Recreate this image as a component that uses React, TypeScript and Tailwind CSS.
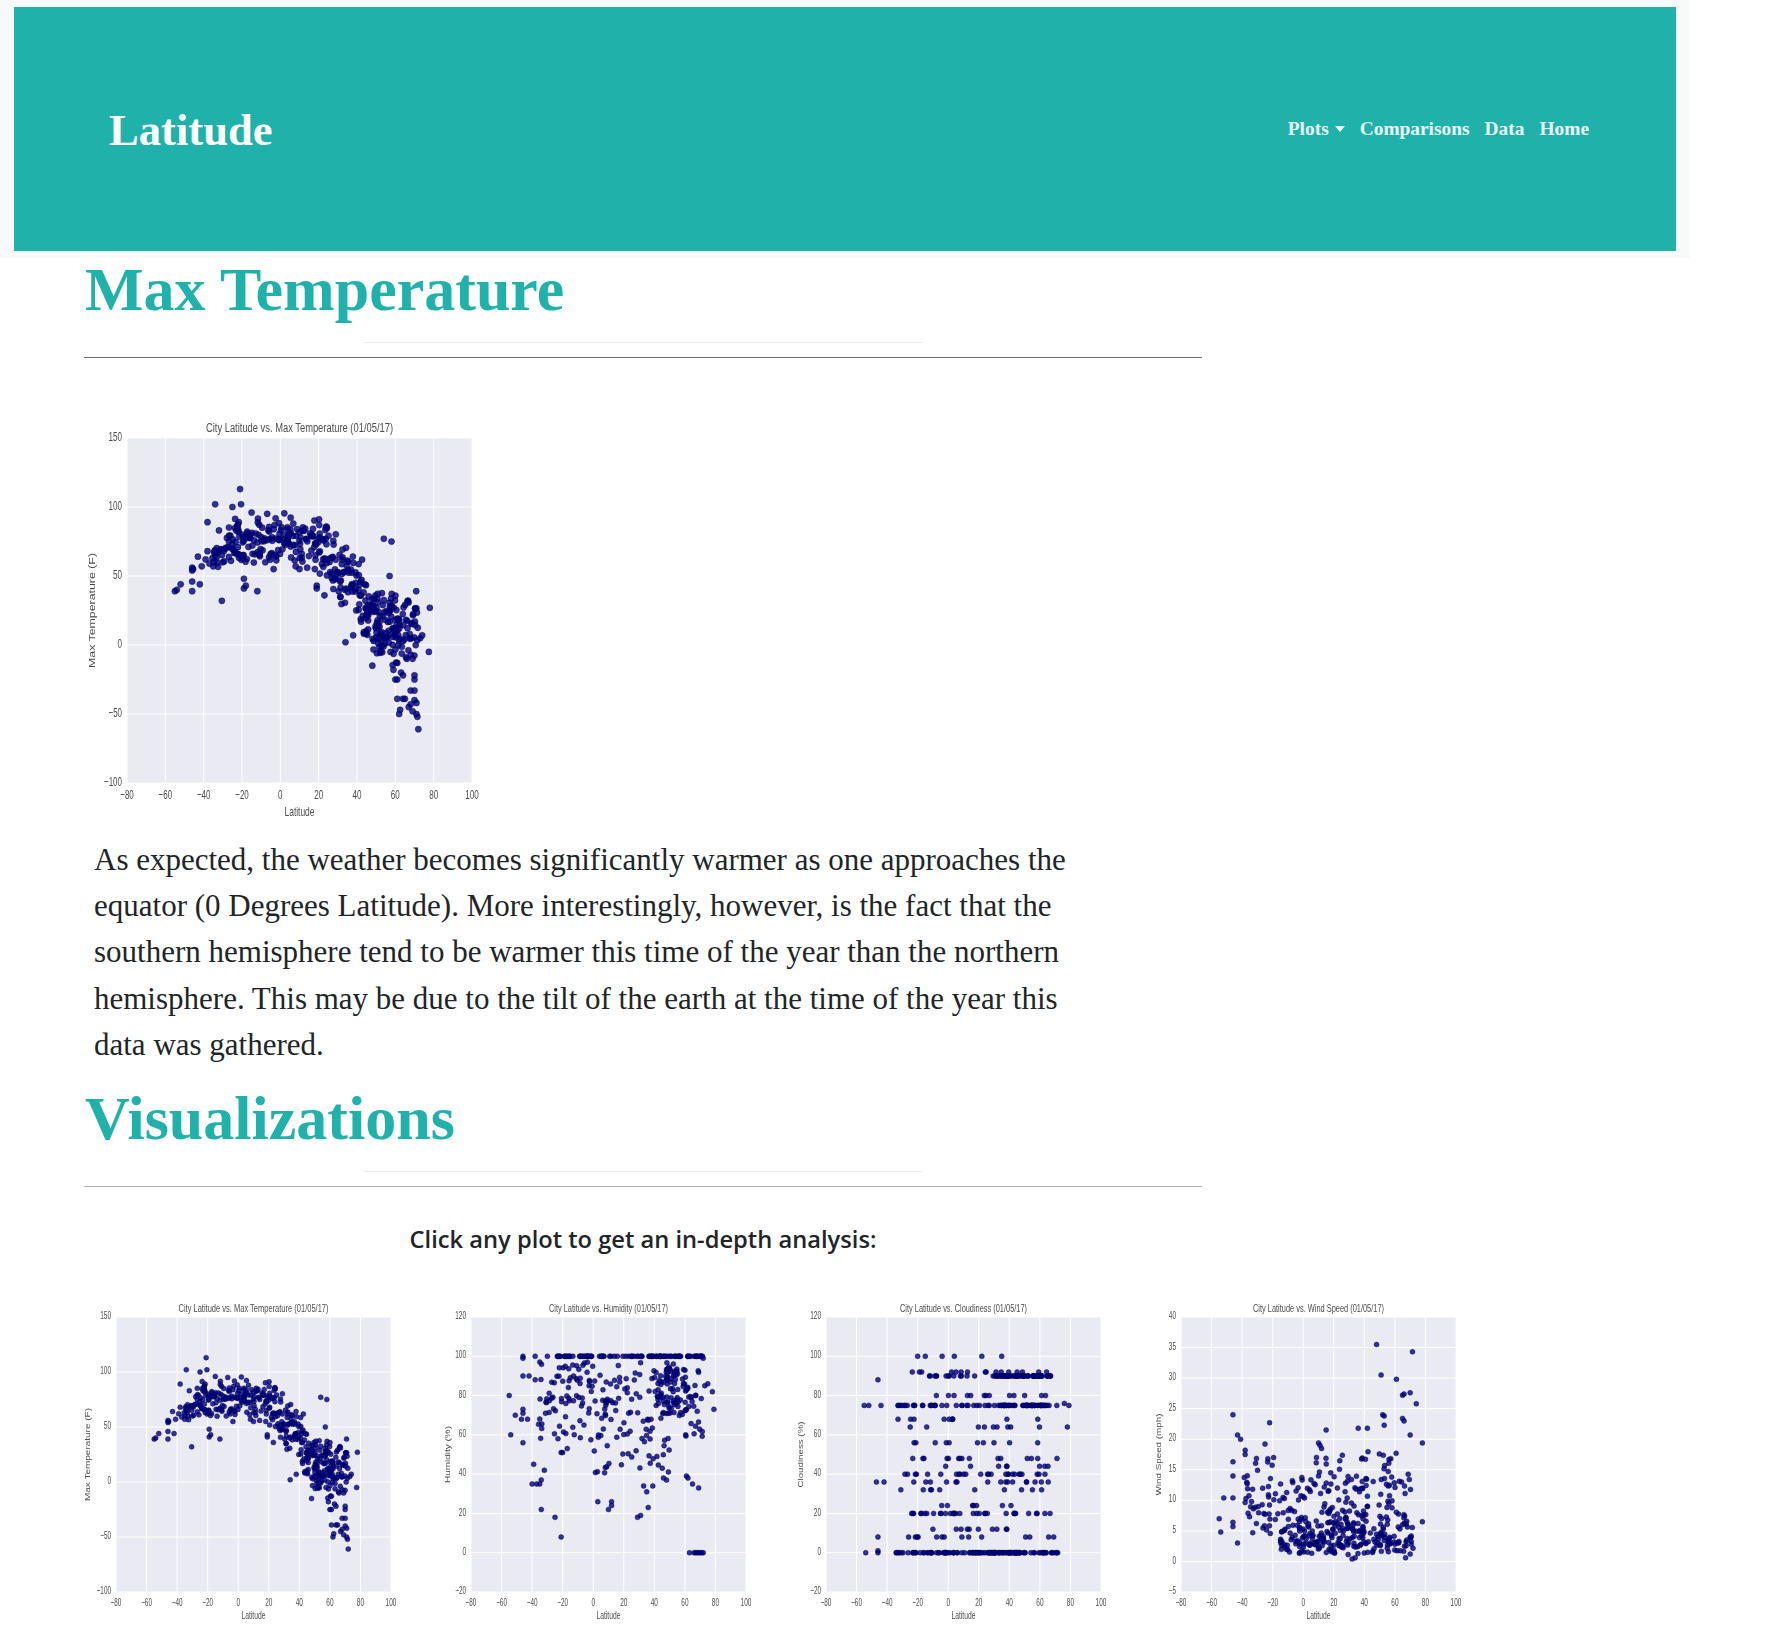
type Pt = [number, number];

// small seeded generator so the scatter clouds stay the same on every render
function makeRng(seed: number) {
  let a = seed;
  return () => {
    a = (a + 0x6d2b79f5) | 0;
    let t = Math.imul(a ^ (a >>> 15), 1 | a);
    t = (t + Math.imul(t ^ (t >>> 7), 61 | t)) ^ t;
    return ((t ^ (t >>> 14)) >>> 0) / 4294967296;
  };
}

function cloud(
  rand: () => number,
  n: number,
  latMin: number,
  latMax: number,
  value: (lat: number) => number,
  sd: number
): Pt[] {
  const out: Pt[] = [];
  for (let i = 0; i < n; i++) {
    const lat = latMin + rand() * (latMax - latMin);
    out.push([lat, value(lat) + (rand() + rand() - 1) * sd]);
  }
  return out;
}

function ridge(lat: number) {
  const knots: Pt[] = [
    [-42, 58], [-32, 68], [-22, 76], [-10, 78], [5, 78], [18, 78],
    [25, 70], [32, 52], [40, 38], [46, 28], [55, 26], [62, 20], [72, 18],
  ];
  for (let i = 1; i < knots.length; i++) {
    if (lat <= knots[i][0]) {
      const [x0, y0] = knots[i - 1];
      const [x1, y1] = knots[i];
      return y0 + ((lat - x0) / (x1 - x0)) * (y1 - y0);
    }
  }
  return 18;
}

function tempData(): Pt[] {
  const r = makeRng(11);
  return [
    ...cloud(r, 70, -36, -14, ridge, 20),
    ...cloud(r, 110, -14, 20, ridge, 19),
    ...cloud(r, 110, 20, 46, ridge, 30),
    ...cloud(r, 50, 44, 60, ridge, 16),
    ...cloud(r, 40, 48, 60, () => 3, 18),
    ...cloud(r, 36, 60, 72, () => 16, 26),
    ...cloud(r, 20, 60, 71, () => 2, 18),
    [-21, 113], [-34, 102], [-25, 100], [-20.5, 102], [-38, 89], [-15, 96], [54, 77], [58, 75],
    [57, 50], [-55, 39], [-54, 40], [-52, 44], [-46, 56], [-46, 54], [-45.5, 55], [-46, 46], [-46, 39],
    [-42, 44], [-43, 64], [-30.5, 32], [-19, 48], [-19, 41], [-18, 43], [-12, 39], [19, 43], [19, 41],
    [23, 36], [34, 2], [38, 7], [78, 27], [77.5, -5], [72, -61], [71.5, -52], [71, -50], [48, -15],
    [-3.5, 55], [8, 57], [10, 55], [14, 56], [18, 55], [-41, 57], [-39, 62], [-38, 68], [-37, 59],
    [-35, 57], [-30, 60], [62, -50], [62.5, -47], [61, -39], [64, -39], [65, -39], [67, -45], [68, -43],
    [69, -48], [70, -40], [71, -42], [68, -33], [70, -33], [60, -25], [61, -25], [70, -25], [70, -22],
    [63, -20], [64, -22], [59, -18], [61, -13], [66, -10], [69, -10], [73, 5], [74, 7],
  ];
}

function humidityData(): Pt[] {
  const r = makeRng(23);
  const pts: Pt[] = [];
  for (let i = 0; i < 95; i++) pts.push([-24 + r() * 96, 100]);
  for (let i = 0; i < 100; i++) pts.push([-36 + r() * 108, 76 + r() * 22]);
  for (let i = 0; i < 70; i++) pts.push([38 + r() * 24, 70 + r() * 24]);
  for (let i = 0; i < 85; i++) pts.push([-36 + r() * 108, 58 + r() * 22]);
  for (let i = 0; i < 30; i++) pts.push([-5 + r() * 55, 40 + r() * 20]);
  return [
    ...pts,
    [-46, 100], [-46, 99], [-38, 100], [-30, 100], [-46, 90], [-42, 90], [-38, 88], [-55, 80], [-51, 70],
    [-46, 73], [-46, 71], [-47, 68], [-43, 68], [-54, 60], [-46, 56], [-39, 45], [-40, 35], [-37, 35],
    [-35, 35], [-34, 37], [-32, 42], [-34, 22], [-25, 18], [-21, 8], [-21, 51], [-20, 51], [-17, 53],
    [3, 26], [12, 26], [12, 24], [10, 22], [29, 18], [31, 19], [36, 23], [33, 34], [35, 31], [39, 34],
    [46, 38], [48, 37], [61, 39], [62, 38], [65, 35], [69, 33], [78, 82], [79, 73], [75, 86], [73, 85],
    [63, 0], [66, 0], [67, 0], [68, 0], [69, 0], [70, 0], [71, 0], [72, 0],
    [71, 100], [72, 99], [70, 100], [68, 100],
  ];
}

function cloudinessData(): Pt[] {
  const r = makeRng(37);
  const rows: [number, number, number, number][] = [
    [0, 90, -35, 72], [8, 14, -35, 72], [12, 10, -30, 62], [20, 34, -25, 70], [24, 7, -38, 62],
    [32, 10, -32, 62], [36, 16, -34, 66], [40, 26, -29, 66], [44, 8, -5, 68], [48, 15, -28, 72],
    [56, 10, -26, 68], [64, 9, -34, 78], [68, 10, -34, 62], [75, 50, -33, 72], [80, 13, -34, 71],
    [90, 36, -24, 71], [92, 16, -34, 66],
  ];
  const pts: Pt[] = [];
  for (const [row, n, a, b] of rows) {
    for (let i = 0; i < n; i++) pts.push([a + r() * (b - a), row]);
  }
  for (let i = 0; i < 40; i++) pts.push([30 + r() * 32, 90]);
  for (let i = 0; i < 36; i++) pts.push([35 + r() * 30, 75]);
  for (let i = 0; i < 36; i++) pts.push([18 + r() * 30, 0]);
  return [
    ...pts,
    [-54, 0], [-46, 0], [-46, 1], [-55, 75], [-52, 75], [-44, 75], [-46, 88], [-47, 36], [-42, 36],
    [-46, 8], [-20, 100], [-15, 100], [-4, 100], [4, 100], [22, 100], [35, 100], [79, 75], [76, 76], [78, 64],
  ];
}

function windData(): Pt[] {
  const r = makeRng(51);
  const pts: Pt[] = [];
  for (let i = 0; i < 260; i++) pts.push([-15 + r() * 87, 1 + r() * r() * 10 + r() * 2]);
  for (let i = 0; i < 100; i++) pts.push([-40 + r() * 112, 4 + r() * 10]);
  for (let i = 0; i < 45; i++) pts.push([5 + r() * 66, 11 + r() * 7]);
  for (let i = 0; i < 24; i++) pts.push([-38 + r() * 20, 5 + r() * 12]);
  return [
    ...pts,
    [48, 35.5], [71.5, 34.3], [51, 30.5], [61, 29.8], [65, 27.2], [66, 27.4], [70, 27.6], [74, 25.8],
    [52, 24], [53, 23.8], [65, 23.4], [66, 23], [53, 22.3], [-46, 24], [-22, 22.7], [-43, 20.7], [-41, 20],
    [15, 21.5], [36, 21.8], [42, 21.8], [70, 20.7], [78, 19.4], [-25, 19.2], [10, 19.4], [11, 19], [12, 18.5],
    [-38, 18.2], [-38, 17.5], [-46, 16.3], [-46, 14], [-55, 7], [-54, 4.8], [-43, 3], [-46, 10.4], [-52, 10.4],
    [-46, 6.4], [-46, 5.7], [78, 6.5], [32, 0.4], [34, 0.6], [67, 0.6], [70, 1.2],
  ];
}

const TEMP = tempData();

interface PlotProps {
  size: "big" | "small";
  title: string;
  titleLen: number;
  ylabel: string;
  yLen: number;
  yGap: number;
  yMin: number;
  yMax: number;
  yStep: number;
  data: Pt[];
}

function Plot({ size, title, titleLen, ylabel, yLen, yGap, yMin, yMax, yStep, data }: PlotProps) {
  const big = size === "big";
  const w = big ? 405 : 325;
  const h = big ? 410 : 336;
  const left = big ? 43 : 32;
  const top = big ? 18 : 17;
  const side = big ? 345 : 275;
  const bottom = top + side;
  const tick = big ? 13 : 10.5;
  const perChar = big ? 4.5 : 3.6;
  const sx = (v: number) => left + ((v + 80) / 180) * side;
  const sy = (v: number) => top + ((yMax - v) / (yMax - yMin)) * side;
  const xs = [-80, -60, -40, -20, 0, 20, 40, 60, 80, 100];
  const ys: number[] = [];
  for (let v = yMin; v <= yMax; v += yStep) ys.push(v);
  const label = (v: number) => (v < 0 ? `\u2212${-v}` : `${v}`);
  const cx = left + side / 2;
  const cy = top + side / 2;

  return (
    <svg width={w} height={h} viewBox={`0 0 ${w} ${h}`} className="block shrink-0 blur-[0.55px]">
      <rect x={left} y={top} width={side} height={side} fill="#eaeaf2" />
      {xs.map((v) => (
        <line key={v} x1={sx(v)} x2={sx(v)} y1={top} y2={bottom} stroke="#fff" strokeWidth={1} />
      ))}
      {ys.map((v) => (
        <line key={v} x1={left} x2={left + side} y1={sy(v)} y2={sy(v)} stroke="#fff" strokeWidth={1} />
      ))}
      {data.map(([a, b], i) => (
        <circle
          key={i}
          cx={sx(a)}
          cy={sy(b)}
          r={big ? 3.1 : 2.5}
          fill="#000080"
          fillOpacity={0.8}
          stroke="#00004d"
          strokeWidth={0.4}
        />
      ))}
      <g fontFamily="Liberation Sans, sans-serif" fill="#4d4d4d">
        <text x={cx} y={12} fontSize={big ? 12.5 : 10.5} textAnchor="middle" textLength={titleLen} lengthAdjust="spacingAndGlyphs">
          {title}
        </text>
        {xs.map((v) => (
          <text
            key={v}
            x={sx(v)}
            y={big ? bottom + 16 : bottom + 14}
            fontSize={tick}
            textAnchor="middle"
            textLength={label(v).length * perChar}
            lengthAdjust="spacingAndGlyphs"
          >
            {label(v)}
          </text>
        ))}
        {ys.map((v) => (
          <text
            key={v}
            x={left - 5}
            y={sy(v) + tick * 0.2}
            fontSize={tick}
            textAnchor="end"
            textLength={label(v).length * perChar}
            lengthAdjust="spacingAndGlyphs"
          >
            {label(v)}
          </text>
        ))}
        <text
          x={cx}
          y={big ? 396 : 319}
          fontSize={tick}
          textAnchor="middle"
          textLength={big ? 30 : 24}
          lengthAdjust="spacingAndGlyphs"
        >
          Latitude
        </text>
        <text
          transform={`translate(${left - yGap} ${cy}) rotate(-90)`}
          fontSize={big ? 9.5 : 7.5}
          textAnchor="middle"
          textLength={yLen}
          lengthAdjust="spacingAndGlyphs"
        >
          {ylabel}
        </text>
      </g>
    </svg>
  );
}

function Heading({ children, rule }: { children: string; rule: string }) {
  return (
    <>
      <h1 className="text-[62px] leading-[63px] font-bold text-[#20b2aa] pl-px">{children}</h1>
      <hr className="mt-[21px] mx-auto w-[558px] border-t border-[#e9ecef]" />
      <hr className={`mt-[14px] border-t ${rule}`} />
    </>
  );
}

export default function App() {
  return (
    <div className="min-h-[1636px] bg-white font-['Liberation_Serif',serif]">
      <div className="w-[1690px] h-[258px] bg-[#f8f9fa] pt-[7px] pl-[14px]">
        <nav className="w-[1662px] h-[244px] bg-[#20b2aa] flex items-center justify-between pl-[95px] pr-[87px]">
          <a className="pt-[2px] text-[44.6px] font-bold text-white leading-none">Latitude</a>
          <ul className="flex items-center gap-[15px] text-[19.4px] font-bold text-white/90">
            <li className="flex items-center gap-[6px]">
              Plots
              <span className="w-0 h-0 border-x-[5.5px] border-x-transparent border-t-[6px] border-t-white/90" />
            </li>
            <li>Comparisons</li>
            <li>Data</li>
            <li>Home</li>
          </ul>
        </nav>
      </div>

      <main className="pl-[84px] w-[1202px]">
        <Heading rule="border-[#707070]">Max Temperature</Heading>

        <div className="mt-[62px]">
          <Plot
            size="big"
            title="City Latitude vs. Max Temperature (01/05/17)"
            titleLen={187}
            ylabel="Max Temperature (F)"
            yLen={115}
            yGap={32}
            yMin={-100}
            yMax={150}
            yStep={50}
            data={TEMP}
          />
        </div>

        <p className="mt-[7px] pl-[10px] w-[1000px] text-[31px] leading-[46.2px] text-[#212529]">
          As expected, the weather becomes significantly warmer as one approaches the equator (0 Degrees Latitude).
          More interestingly, however, is the fact that the southern hemisphere tend to be warmer this time of the
          year than the northern hemisphere. This may be due to the tilt of the earth at the time of the year this
          data was gathered.
        </p>

        <div className="mt-[19px]">
          <Heading rule="border-[#adadad]">Visualizations</Heading>
        </div>

        <p className="mt-[36px] text-center text-[23.7px] leading-[33px] font-semibold text-[#212529] font-['Open_Sans',sans-serif]">
          Click any plot to get an in-depth analysis:
        </p>
      </main>

      <div className="mt-[44px] pl-[84px] flex gap-[30px]">
        <Plot
          size="small"
          title="City Latitude vs. Max Temperature (01/05/17)"
          titleLen={150}
          ylabel="Max Temperature (F)"
          yLen={93}
          yGap={26}
          yMin={-100}
          yMax={150}
          yStep={50}
          data={TEMP}
        />
        <Plot
          size="small"
          title="City Latitude vs. Humidity (01/05/17)"
          titleLen={119}
          ylabel="Humidity (%)"
          yLen={57}
          yGap={21}
          yMin={-20}
          yMax={120}
          yStep={20}
          data={humidityData()}
        />
        <Plot
          size="small"
          title="City Latitude vs. Cloudiness (01/05/17)"
          titleLen={127}
          ylabel="Cloudiness (%)"
          yLen={66}
          yGap={23}
          yMin={-20}
          yMax={120}
          yStep={20}
          data={cloudinessData()}
        />
        <Plot
          size="small"
          title="City Latitude vs. Wind Speed (01/05/17)"
          titleLen={131}
          ylabel="Wind Speed (mph)"
          yLen={82}
          yGap={20}
          yMin={-5}
          yMax={40}
          yStep={5}
          data={windData()}
        />
      </div>
    </div>
  );
}
